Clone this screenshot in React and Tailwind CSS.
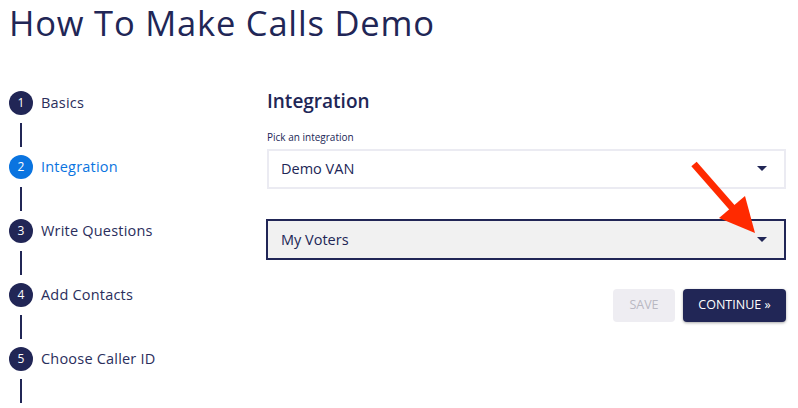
import React from 'react';

const steps = [
    { n: 1, label: 'Basics' },
    { n: 2, label: 'Integration', active: true },
    { n: 3, label: 'Write Questions' },
    { n: 4, label: 'Add Contacts' },
    { n: 5, label: 'Choose Caller ID' },
];

const Caret = () => (
    <svg width="10" height="6" viewBox="0 0 10 6" className="shrink-0">
        <path d="M0 0 L10 0 L5 5 Z" fill="#212656" />
    </svg>
);

const Stepper = () => (
    <div className="w-[266px] pl-[9px] pt-[45px]">
        {steps.map(step => (
            <div key={step.n}>
                <div className="flex items-center h-6 gap-2">
                    <div className={`w-6 h-6 rounded-full flex items-center justify-center text-white text-[12px] ${step.active ? 'bg-[#0a74e0]' : 'bg-[#212656]'}`}>
                        {step.n}
                    </div>
                    <span className={`text-[14.5px] tracking-[0.2px] ${step.active ? 'text-[#0a74e0]' : 'text-[#2a2e5c]'}`}>{step.label}</span>
                </div>
                <div className="w-6 flex justify-center py-2">
                    <div className="w-[1.5px] h-6 bg-[#212656]" />
                </div>
            </div>
        ))}
    </div>
);

const App = () => {
    return (
        <div className="relative w-[798px] h-[408px] bg-white overflow-hidden text-[#212656]" style={{ fontFamily: '"Open Sans", "Liberation Sans", sans-serif' }}>
            <h1 className="pl-[9px] pt-[1px] pb-[1px] pr-2 text-[34.5px] leading-[44px] text-[#212656] tracking-[0.8px] whitespace-nowrap w-fit">How To Make Calls Demo</h1>
            <div className="flex">
                <Stepper />
                <div className="w-[520px] pt-[43px]">
                    <h2 className="text-[19px] font-semibold leading-6 pl-[1px]">Integration</h2>
                    <div className="mt-[18px] text-[10px] font-medium leading-3 pl-[1px]">Pick an integration</div>
                    <div className="mt-[6px] ml-[1px] h-10 border-2 border-[#ebebf2] bg-white flex items-center justify-between pl-[12px] pr-[17px]">
                        <span className="text-[14.5px]">Demo VAN</span>
                        <Caret />
                    </div>
                    <div className="mt-[30px] h-[41px] border-2 border-[#212656] bg-[#f1f1f1] flex items-center justify-between pl-[13px] pr-[17px]">
                        <span className="text-[14.5px]">My Voters</span>
                        <Caret />
                    </div>
                    <div className="mt-[29px] flex justify-end gap-2">
                        <button className="w-[62px] h-[33px] rounded-[4px] bg-[#eeedf2] text-[#b9b8c2] text-[12.5px]">SAVE</button>
                        <button className="w-[103px] h-[33px] rounded-[4px] bg-[#212656] text-white text-[12.5px] shadow-[0_1px_3px_rgba(0,0,0,0.35)]">CONTINUE »</button>
                    </div>
                </div>
            </div>
            <svg className="absolute left-0 top-0 pointer-events-none" width="798" height="408">
                <line x1="694" y1="164" x2="736" y2="212" stroke="#ff2a00" strokeWidth="7" strokeLinecap="butt" />
                <polygon points="719,218 745,196 755,233" fill="#ff2a00" />
            </svg>
        </div>
    );
};

export default App;
